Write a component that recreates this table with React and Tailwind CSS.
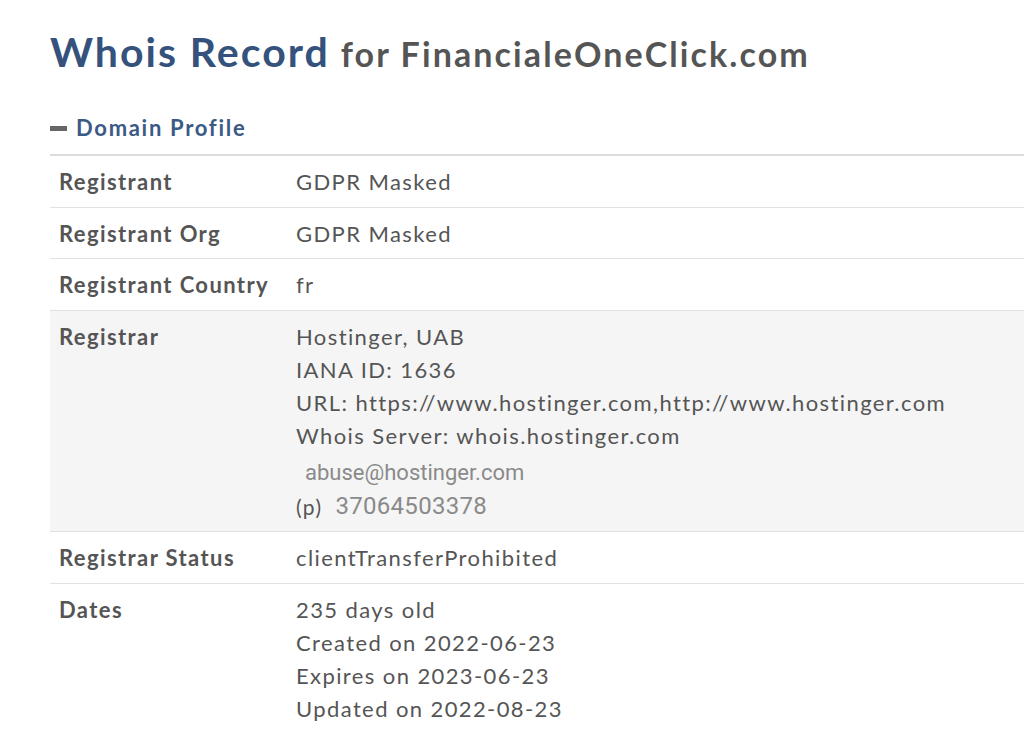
import React from 'react';

const rows = [
  { label: 'Registrant', lines: ['GDPR Masked'] },
  { label: 'Registrant Org', lines: ['GDPR Masked'] },
  { label: 'Registrant Country', lines: ['fr'] },
  { label: 'Registrar', registrar: true },
  { label: 'Registrar Status', lines: ['clientTransferProhibited'] },
  {
    label: 'Dates',
    lines: ['235 days old', 'Created on 2022-06-23', 'Expires on 2023-06-23', 'Updated on 2022-08-23'],
  },
];

function Registrar() {
  return (
    <div>
      <div>Hostinger, UAB</div>
      <div>IANA ID: 1636</div>
      <div>URL: https://www.hostinger.com,http://www.hostinger.com</div>
      <div>Whois Server: whois.hostinger.com</div>
      <div
        className="mt-[4px] pl-[9px] text-[22px] leading-[34px] text-[#8a8a8a] tracking-[0px]"
        style={{ fontFamily: '"Liberation Sans Narrow", Roboto, sans-serif' }}
      >
        abuse@hostinger.com
      </div>
      <div className="flex items-center">
        <span className="text-[21px]">(p)</span>
        <span
          className="ml-[13px] text-[24px] text-[#8a8a8a] tracking-[0.3px]"
          style={{ fontFamily: '"Liberation Sans Narrow", Roboto, sans-serif' }}
        >
          37064503378
        </span>
      </div>
    </div>
  );
}

export default function App() {
  return (
    <div className="min-h-[730px] bg-white pl-[50px] text-[#555]" style={{ fontFamily: 'Lato, "Open Sans", sans-serif' }}>
      <h1 className="pt-[26px] leading-[52px] font-bold">
        <span className="text-[41px] tracking-[2px] text-[#35527d]">Whois Record</span>
        <span className="ml-[11px] text-[34px] tracking-[2.1px] text-[#555]">for FinancialeOneClick.com</span>
      </h1>
      <div className="mt-[25px] flex items-center gap-[9px] text-[22px] leading-[32px] font-bold tracking-[1.7px] text-[#3b5a86]">
        <span className="block h-[5px] w-[17px] bg-[#666]"></span>
        <span>Domain Profile</span>
      </div>
      <div className="mt-[10px] border-t-2 border-[#dcdcdc]">
        {rows.map((r) => (
          <div
            key={r.label}
            className={`flex border-b border-[#e2e2e2] text-[22px] leading-[33px] tracking-[1.4px] ${
              r.registrar ? 'bg-[#f5f5f5]' : ''
            }`}
          >
            <div className="w-[246px] shrink-0 pl-[9px] pt-[9px] pb-[8.5px] font-bold">{r.label}</div>
            <div className="pt-[9px] pb-[8.5px]">
              {r.registrar ? <Registrar /> : r.lines.map((l) => <div key={l}>{l}</div>)}
            </div>
          </div>
        ))}
      </div>
    </div>
  );
}
